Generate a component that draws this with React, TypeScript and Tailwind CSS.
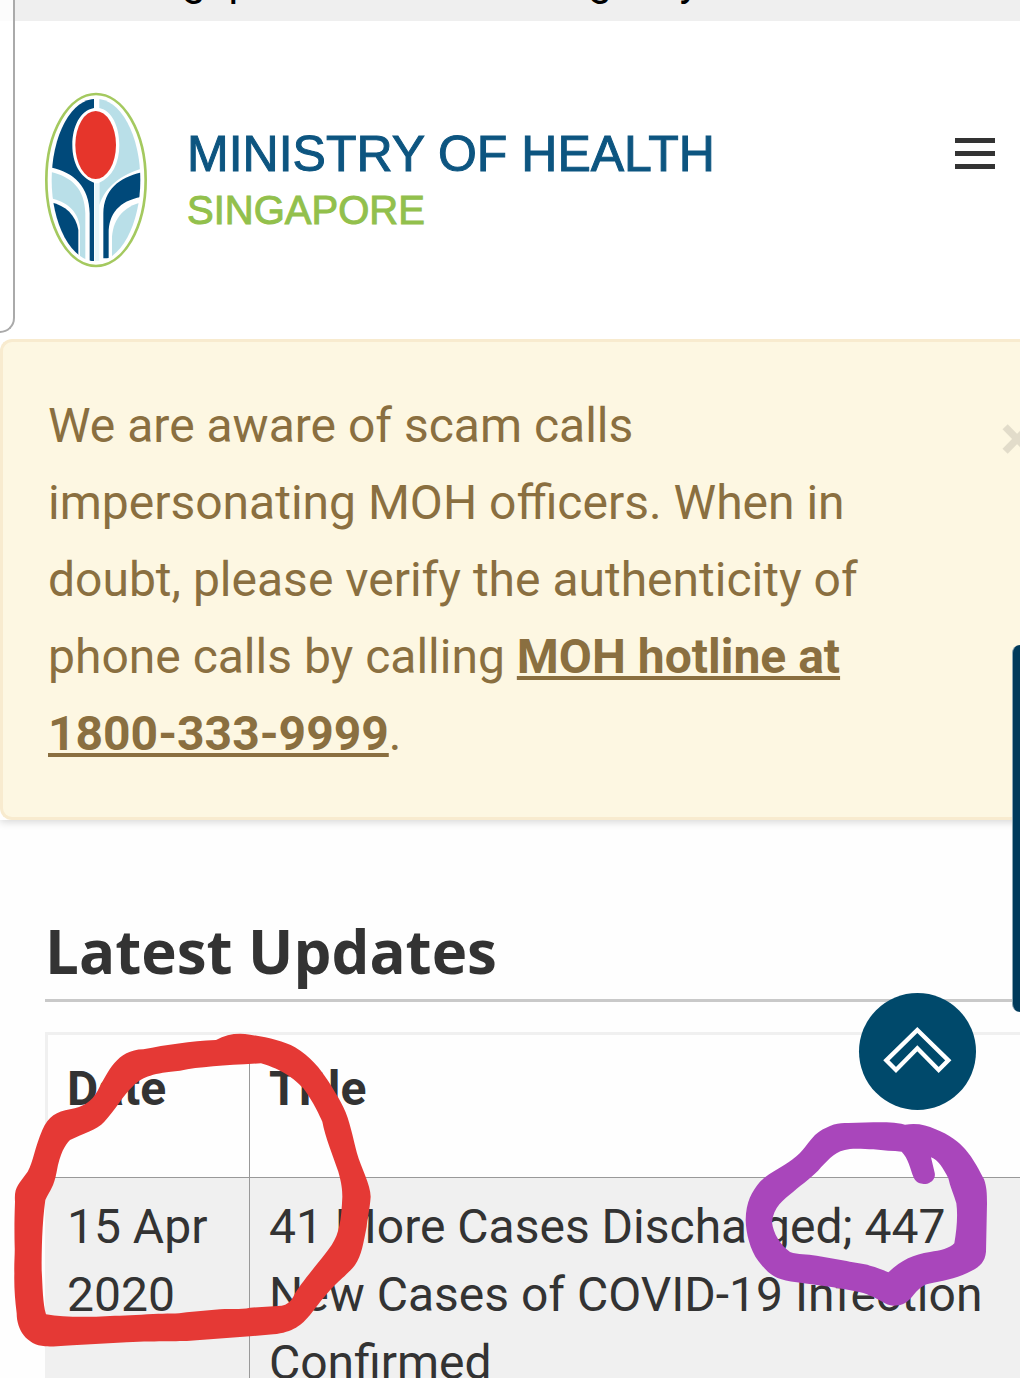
import type { ReactNode } from "react";

const UPDATES = [
  {
    date: "15 Apr 2020",
    title: "41 More Cases Discharged; 447 New Cases of COVID-19 Infection Confirmed",
  },
];

function Crest() {
  return (
    <svg viewBox="0 0 390 600" className="h-[200px] w-[130px] shrink-0" aria-hidden="true">
      <defs>
        <clipPath id="crest">
          <ellipse cx="198" cy="300" rx="133" ry="244" />
        </clipPath>
      </defs>
      <ellipse cx="198" cy="300" rx="149" ry="258" fill="#fff" stroke="#a4c95f" strokeWidth="8" />
      <g clipPath="url(#crest)">
        <path d="M192 50V84C150 92 127 140 127 195C127 250 150 292 192 308V543H179V400C178 320 130 275 60 262V50Z" fill="#00497a" />
        <path d="M208 50V84C246 92 268 140 268 195C268 250 246 292 208 308V375C228 315 280 282 340 264V50Z" fill="#b9dfe8" />
        <path d="M60 275C125 290 164 325 166 400V540H150V440C143 390 105 362 60 355Z" fill="#b9dfe8" />
        <path d="M60 366C105 375 138 405 145 450V530H60Z" fill="#00497a" />
        <path d="M340 276C270 292 222 325 220 400V535H236V460C236 400 270 360 340 350Z" fill="#00497a" />
        <path d="M340 366C290 375 250 410 246 470V530H340Z" fill="#b9dfe8" />
        <path d="M194 310H208V543H194Z" fill="#e6f5f9" />
      </g>
      <ellipse cx="197" cy="195" rx="61" ry="102" fill="#e6352b" />
    </svg>
  );
}

function Header() {
  return (
    <div className="flex items-start justify-between pt-[59px] pr-[25px] pb-[59px] pl-[30px]">
      <a href="#home" className="flex items-start">
        <Crest />
        <span className="flex flex-col pt-[44px] pl-[27px] font-['Liberation_Sans',sans-serif]">
          <span className="text-[50px] leading-[60px] text-[#0d5580] [-webkit-text-stroke:1px_#0d5580]">
            MINISTRY OF HEALTH
          </span>
          <span className="text-[40px] leading-[52px] text-[#92c04c] [-webkit-text-stroke:1px_#92c04c]">
            SINGAPORE
          </span>
        </span>
      </a>
      <button type="button" aria-label="Menu" className="mt-[58px] flex w-10 flex-col gap-2">
        <span className="h-[5px] w-full bg-[#333]" />
        <span className="h-[5px] w-full bg-[#333]" />
        <span className="h-[5px] w-full bg-[#333]" />
      </button>
    </div>
  );
}

function ScamAlert() {
  return (
    <div
      role="alert"
      className="relative rounded-l-xl border-3 border-r-0 border-[#f8ebcf] bg-[#fdf7e2] py-[45px] pr-[120px] pl-[45px] text-5xl leading-[77px] text-[#8a6f40]"
    >
      <p>
        We are aware of scam calls impersonating MOH officers. When in doubt, please verify the
        authenticity of phone calls by calling{" "}
        <a href="tel:18003339999" className="font-bold underline">
          MOH hotline at 1800-333-9999
        </a>
        .
      </p>
      <button
        type="button"
        aria-label="Close"
        className="absolute top-[65px] -right-[14px] text-[63px] leading-[63px] font-bold text-black opacity-10"
      >
        ×
      </button>
    </div>
  );
}

function Th({ children, className }: { children: ReactNode; className: string }) {
  return (
    <th className={`h-[143px] border-b border-[#999] px-[19px] pt-5 text-left align-top font-bold ${className}`}>
      {children}
    </th>
  );
}

function LatestUpdates() {
  return (
    <section className="pt-[93px] pl-[45px]">
      <h2 className="border-b-3 border-[#c9c9c9] pb-[9px] font-['Open_Sans',sans-serif] text-[60px] leading-[77px] font-bold">
        Latest Updates
      </h2>
      <table className="mt-[30px] w-full border-separate border-spacing-0 border-t-3 border-l-3 border-[#f0f0f0] text-5xl leading-[68px]">
        <thead>
          <tr>
            <Th className="w-[202px] border-r">Date</Th>
            <Th className="">Title</Th>
          </tr>
        </thead>
        <tbody>
          {UPDATES.map((row) => (
            <tr key={row.date} className="bg-[#f0f0f0] align-top">
              <td className="border-r border-[#999] px-[19px] py-[15px]">{row.date}</td>
              <td className="px-[19px] py-[15px]">{row.title}</td>
            </tr>
          ))}
        </tbody>
      </table>
    </section>
  );
}

/* freehand pen marks over the first row */
function PenMarks() {
  return (
    <>
      <svg
        viewBox="0 0 1200 1074"
        className="pointer-events-none absolute top-[1020px] left-0 h-[358px] w-[400px]"
        aria-hidden="true"
      >
        <path
          fill="#e53935"
          fillRule="evenodd"
          d="M648 60C680 42 715 38 750 44C800 52 850 62 885 82C930 108 960 145 985 184C1010 225 1037 265 1048 310C1058 345 1062 365 1071 400C1082 440 1112 495 1112 530C1109 570 1103 590 1100 620C1090 670 1085 705 1065 735C1050 755 1020 780 1005 795C975 825 950 860 930 885C905 915 880 937 820 943L750 949L590 961C540 966 480 962 380 967L245 974C200 975 170 981 135 979C80 975 50 930 50 880C45 840 42 800 43 760C42 730 45 700 44 680C43 640 43 600 45 545C42 500 55 495 83 455C100 425 105 380 127 330C145 290 170 274 210 268C250 260 275 245 293 212C325 155 350 90 430 88C500 74 570 64 648 60Z
          M783 130C850 150 880 175 910 205C940 245 960 290 967 305C975 350 1000 410 1015 455C1025 490 1027 510 1027 530C1024 600 1018 640 995 675C960 725 900 790 880 830C872 845 860 854 845 857L750 863C720 870 690 865 660 868L560 877C530 883 500 880 460 882C410 885 370 887 330 888C260 892 190 892 138 883C128 850 128 800 125 750C125 690 126 610 136 540C150 510 162 500 170 455C180 400 195 375 210 360C250 340 290 330 313 305C350 265 365 230 400 197C430 168 460 160 540 152C600 140 680 136 783 130Z"
        />
      </svg>
      <svg
        viewBox="0 0 900 834"
        className="pointer-events-none absolute top-[1100px] left-[720px] h-[278px] w-[300px]"
        aria-hidden="true"
      >
        <path
          fill="#a946bb"
          fillRule="evenodd"
          d="M330 78C350 69 365 68 385 69L460 67C500 67 525 67 555 74C590 68 620 75 645 87C690 105 715 125 735 147C760 175 780 215 792 238C800 260 801 280 801 310L798 455C795 485 780 500 755 512C720 532 680 540 640 548C610 552 595 565 575 592C555 615 540 617 520 617C495 615 480 597 450 587C430 575 380 570 340 562L230 547C160 540 140 515 115 483C90 450 78 400 77 360C78 305 95 275 120 245C145 220 190 200 218 178C250 155 265 125 285 105C300 92 315 84 330 78Z
          M390 147C415 145 440 148 460 148C490 152 520 153 545 155C565 175 570 205 582 235C592 255 612 252 622 251C640 245 647 232 644 218L633 172C655 180 670 205 685 235C690 260 702 285 709 310C714 345 710 390 703 430C690 445 660 452 630 456C580 463 545 480 505 517C490 510 470 502 450 497C430 489 405 490 380 483L290 467C260 462 235 465 210 456C180 435 160 400 156 367C160 320 190 300 220 275C250 250 280 230 303 202C330 175 345 152 390 147Z"
        />
      </svg>
    </>
  );
}

export default function App() {
  return (
    <div className="relative h-screen overflow-hidden bg-[#fefefe] font-[Roboto,sans-serif] text-[#333]">
      <header className="bg-white shadow-[0_2px_8px_rgba(0,0,0,0.16)]">
        <div className="flex h-[21px] items-end overflow-hidden bg-[#efefef] pl-[86px] text-[42px] leading-[80px] whitespace-nowrap text-black">
          A Singapore Government Agency Website
        </div>
        <Header />
        <ScamAlert />
      </header>

      <LatestUpdates />

      <div className="absolute top-0 left-0 h-[333px] w-[15px] rounded-br-[18px] border-r-2 border-b-2 border-[#aaa] bg-white/80" />
      <button
        type="button"
        aria-label="Feedback"
        className="absolute top-[645px] right-0 h-[367px] w-2 rounded-l-lg border-l border-[#8aa5b2] bg-[#003a5b]"
      />
      <a
        href="#top"
        aria-label="Back to top"
        className="absolute top-[993px] right-11 size-[117px] rounded-full bg-[#00496b]"
      >
        <svg viewBox="0 0 351 351" fill="none" stroke="#fff" strokeWidth="13">
          <path d="M175 111L268 202L239 231L175 166L111 231L82 202Z" />
        </svg>
      </a>
      <PenMarks />
    </div>
  );
}
